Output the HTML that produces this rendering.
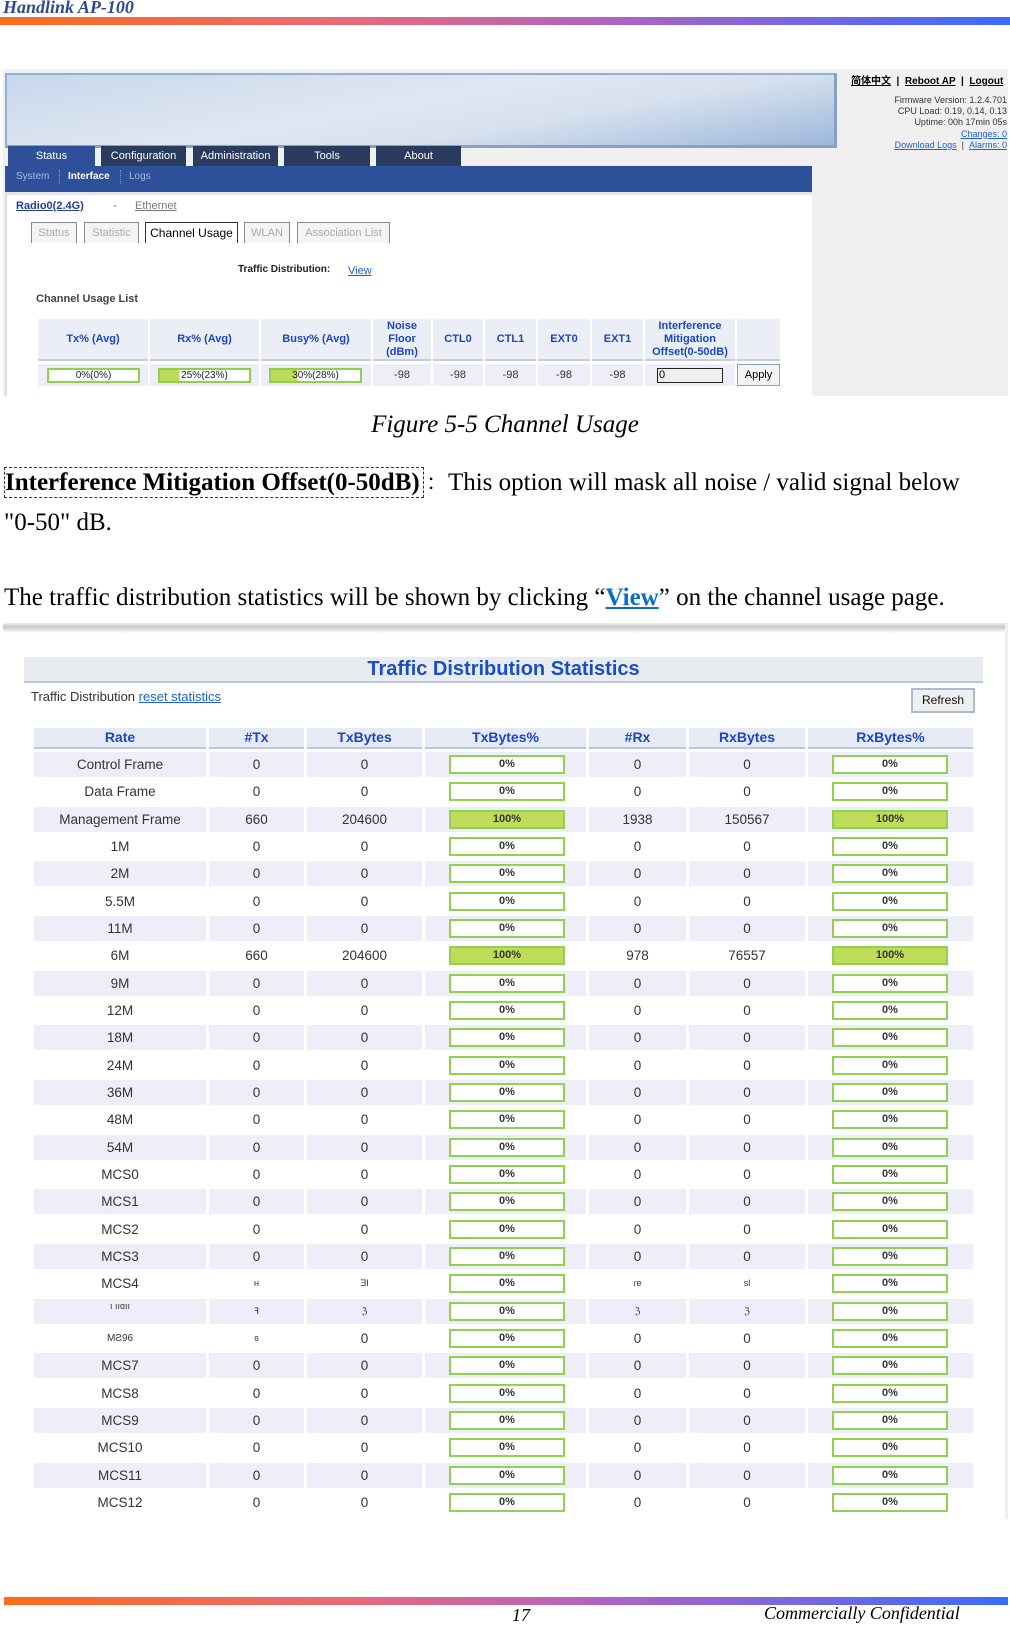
<!DOCTYPE html>
<html><head><meta charset="utf-8">
<style>
*{margin:0;padding:0;box-sizing:border-box}
body{width:1010px;height:1626px;position:relative;background:#fff;overflow:hidden;font-family:"Liberation Sans",sans-serif}
.a{position:absolute}
.ser{font-family:"Liberation Serif",serif}
.gbar{background:linear-gradient(to right,#ff6a1a,#e8697a 35%,#b063c4 60%,#3a6bff)}
.tab{position:absolute;top:146px;height:20px;color:#fff;font-size:11px;text-align:center;line-height:20px;background:#2a3b60}
.sub{position:absolute;top:222px;height:21px;border:1px solid #888;border-bottom:none;font-size:11px;color:#aaa;text-align:center;line-height:20px;background:#f4f4f4}
.ch{position:absolute;top:319px;height:42px;background:#eceef7;border-bottom:2px solid #c8cbd8;color:#1a47c0;font-weight:bold;font-size:11px;text-align:center;display:flex;align-items:center;justify-content:center;line-height:13px}
.cd{position:absolute;top:364px;height:22px;background:#eeeefa;font-size:11px;color:#333;text-align:center;line-height:22px}
.sbar{position:absolute;top:368px;height:15px;border:2px solid #8fd14f;background:#fff;font-size:10px;line-height:11px;text-align:center;color:#222}
.row{position:absolute;left:34px;height:25px;display:flex;gap:3px}
.row div{height:25px;font-size:13.5px;color:#333;text-align:center;line-height:25px;position:relative}
.sh div{background:#eeeefa}
.bar{position:absolute;top:3px;left:24px;width:116px;height:19px;border:2px solid #92d050;background:#fff;font-size:11px;font-weight:bold;line-height:15px;color:#333;text-align:center}
.full{background:#bedc5a}
.th{position:absolute;top:728px;height:21px;background:#e6eaf4;border-bottom:2px solid #b6c6e0;color:#1a47c0;font-weight:bold;font-size:14px;text-align:center;line-height:19px}
</style></head><body>

<div class="a ser" style="left:3px;top:-3px;font-size:18px;font-weight:bold;font-style:italic;color:#2b4a92">Handlink AP-100</div>
<div class="a gbar" style="left:0;top:17px;width:1010px;height:8px"></div>

<!-- screenshot 1 -->
<div class="a" style="left:3px;top:69px;width:1005px;height:327px;background:#f0f0f0"></div>
<div class="a" style="left:5px;top:73px;width:832px;height:75px;border:2px solid #8fb0d8;border-right:3px solid #8aa0c0;border-bottom:3px solid #8aa0c0;background:linear-gradient(170deg,#c9d7ec 0%,#dfe7f2 45%,#d7e1ee 65%,#9db8dc 100%)"></div>
<div class="tab" style="left:8px;width:87px;background:#2f4f99">Status</div>
<div class="tab" style="left:101px;width:85px">Configuration</div>
<div class="tab" style="left:193px;width:85px">Administration</div>
<div class="tab" style="left:284px;width:86px">Tools</div>
<div class="tab" style="left:376px;width:85px">About</div>
<div class="a" style="left:5px;top:166px;width:807px;height:26px;background:#2e4f99"></div>
<div class="a" style="left:16px;top:171px;font-size:10px;color:#a9b8dc">System</div>
<div class="a" style="left:59px;top:170px;height:14px;border-left:1px dotted #7f95c8"></div>
<div class="a" style="left:68px;top:171px;font-size:10px;color:#fff;font-weight:bold">Interface</div>
<div class="a" style="left:120px;top:170px;height:14px;border-left:1px dotted #7f95c8"></div>
<div class="a" style="left:129px;top:171px;font-size:10px;color:#a9b8dc">Logs</div>
<div class="a" style="left:5px;top:192px;width:807px;height:204px;background:#fff;border-left:2px solid #ddd;border-top:3px solid #e6e6e6"></div>

<div class="a" style="left:16px;top:200px;font-size:11px;font-weight:bold;color:#1f3f99;text-decoration:underline">Radio0(2.4G)</div>
<div class="a" style="left:113px;top:200px;font-size:11px;color:#666">-</div>
<div class="a" style="left:135px;top:200px;font-size:11px;color:#777;text-decoration:underline">Ethernet</div>
<div class="sub" style="left:31px;width:46px">Status</div>
<div class="sub" style="left:84px;width:55px">Statistic</div>
<div class="sub" style="left:145px;width:93px;background:#fff;color:#000;border-color:#333;font-size:12px">Channel Usage</div>
<div class="sub" style="left:244px;width:46px">WLAN</div>
<div class="sub" style="left:297px;width:93px">Association List</div>
<div class="a" style="left:238px;top:264px;font-size:10px;font-weight:bold;color:#222">Traffic Distribution:</div>
<div class="a" style="left:348px;top:265px;font-size:11px;color:#1a60d8;text-decoration:underline">View</div>
<div class="a" style="left:36px;top:293px;font-size:11px;font-weight:bold;color:#444">Channel Usage List</div>

<div class="ch" style="left:38px;width:110px">Tx% (Avg)</div>
<div class="ch" style="left:150px;width:109px">Rx% (Avg)</div>
<div class="ch" style="left:261px;width:110px">Busy% (Avg)</div>
<div class="ch" style="left:373px;width:58px">Noise<br>Floor<br>(dBm)</div>
<div class="ch" style="left:433px;width:50px">CTL0</div>
<div class="ch" style="left:485px;width:51px">CTL1</div>
<div class="ch" style="left:538px;width:52px">EXT0</div>
<div class="ch" style="left:592px;width:51px">EXT1</div>
<div class="ch" style="left:645px;width:90px">Interference<br>Mitigation<br>Offset(0-50dB)</div>
<div class="ch" style="left:737px;width:43px"></div>
<div class="cd" style="left:38px;width:110px"></div>
<div class="cd" style="left:150px;width:109px"></div>
<div class="cd" style="left:261px;width:110px"></div>
<div class="cd" style="left:373px;width:58px">-98</div>
<div class="cd" style="left:433px;width:50px">-98</div>
<div class="cd" style="left:485px;width:51px">-98</div>
<div class="cd" style="left:538px;width:52px">-98</div>
<div class="cd" style="left:592px;width:51px">-98</div>
<div class="cd" style="left:645px;width:90px"></div>
<div class="sbar" style="left:47px;width:93px">0%(0%)</div>
<div class="sbar" style="left:158px;width:93px;background:linear-gradient(to right,#bedc5a 22%,#fff 22%)">25%(23%)</div>
<div class="sbar" style="left:269px;width:93px;background:linear-gradient(to right,#bedc5a 30%,#fff 30%)">30%(28%)</div>
<div class="a" style="left:657px;top:368px;width:66px;height:15px;border:1px solid #222;background:#eee;font-size:11px;line-height:13px;padding-left:1px">0</div>
<div class="a" style="left:737px;top:364px;width:43px;height:22px;border:1px solid #8aa0c0;background:#f4f4f4;font-size:11px;text-align:center;line-height:20px">Apply</div>

<div class="a" style="left:851px;top:72px;font-size:10px;font-weight:bold;color:#000;white-space:nowrap;font-family:'Liberation Sans','Noto Sans CJK SC',sans-serif"><u>简体中文</u> &nbsp;| &nbsp;<u>Reboot AP</u> &nbsp;| &nbsp;<u>Logout</u></div>
<div class="a" style="right:3px;top:95px;font-size:9px;color:#333;text-align:right;line-height:11.2px;white-space:nowrap">Firmware Version: 1.2.4.701<br>CPU Load: 0.19, 0.14, 0.13<br>Uptime: 00h 17min 05s<br><u style="color:#1a60d8">Changes: 0</u><br><u style="color:#1a60d8">Download Logs</u> &nbsp;| &nbsp;<u style="color:#1a60d8">Alarms: 0</u></div>

<!-- text -->
<div class="a ser" style="left:0;width:1010px;top:411px;text-align:center;font-size:25px;font-style:italic;color:#000">Figure 5-5 Channel Usage</div>
<div class="a ser" style="left:4px;top:467px;height:31px;width:420px;border:1px dashed #333"></div>
<div class="a ser" style="left:5px;top:466px;font-size:25px;color:#000;white-space:nowrap"><b>Interference Mitigation Offset(0-50dB)</b> <span style="font-family:'Noto Serif CJK SC',serif;font-size:22px">：</span>This option will mask all noise / valid signal below</div>
<div class="a ser" style="left:4px;top:509px;font-size:25px;color:#000">"0-50" dB.</div>
<div class="a ser" style="left:4px;top:584px;font-size:25px;color:#000;white-space:nowrap">The traffic distribution statistics will be shown by clicking “<b style="color:#0a6ec8;text-decoration:underline">View</b>” on the channel usage page.</div>

<!-- screenshot 2 -->
<div class="a" style="left:3px;top:623px;width:1005px;height:10px;background:linear-gradient(#eee,#c8c8c8 40%,#fff)"></div>
<div class="a" style="left:1005px;top:623px;width:3px;height:896px;background:#eee"></div>
<div class="a" style="left:24px;top:657px;width:959px;height:26px;background:#e8ebf0;border-bottom:2px solid #b8c8e0;text-align:center;font-size:20px;font-weight:bold;color:#1a4fc0;line-height:24px">Traffic Distribution Statistics</div>
<div class="a" style="left:31px;top:689px;font-size:13px;color:#333">Traffic Distribution <span style="color:#1a60d8;text-decoration:underline">reset statistics</span></div>
<div class="a" style="left:911px;top:688px;width:64px;height:25px;border:2px solid #a8bcd4;background:#f0f0f0;font-size:12px;text-align:center;line-height:21px;color:#111">Refresh</div>

<div class="th" style="left:34px;width:172px">Rate</div>
<div class="th" style="left:209px;width:95px">#Tx</div>
<div class="th" style="left:307px;width:115px">TxBytes</div>
<div class="th" style="left:425px;width:161px">TxBytes%</div>
<div class="th" style="left:589px;width:97px">#Rx</div>
<div class="th" style="left:689px;width:116px">RxBytes</div>
<div class="th" style="left:808px;width:165px">RxBytes%</div>

<div class="row sh" style="top:752px"><div style="width:172px">Control Frame</div><div style="width:95px">0</div><div style="width:115px">0</div><div style="width:161px"><span class="bar">0%</span></div><div style="width:97px">0</div><div style="width:116px">0</div><div style="width:165px"><span class="bar">0%</span></div></div>
<div class="row" style="top:779px"><div style="width:172px">Data Frame</div><div style="width:95px">0</div><div style="width:115px">0</div><div style="width:161px"><span class="bar">0%</span></div><div style="width:97px">0</div><div style="width:116px">0</div><div style="width:165px"><span class="bar">0%</span></div></div>
<div class="row sh" style="top:807px"><div style="width:172px">Management Frame</div><div style="width:95px">660</div><div style="width:115px">204600</div><div style="width:161px"><span class="bar full">100%</span></div><div style="width:97px">1938</div><div style="width:116px">150567</div><div style="width:165px"><span class="bar full">100%</span></div></div>
<div class="row" style="top:834px"><div style="width:172px">1M</div><div style="width:95px">0</div><div style="width:115px">0</div><div style="width:161px"><span class="bar">0%</span></div><div style="width:97px">0</div><div style="width:116px">0</div><div style="width:165px"><span class="bar">0%</span></div></div>
<div class="row sh" style="top:861px"><div style="width:172px">2M</div><div style="width:95px">0</div><div style="width:115px">0</div><div style="width:161px"><span class="bar">0%</span></div><div style="width:97px">0</div><div style="width:116px">0</div><div style="width:165px"><span class="bar">0%</span></div></div>
<div class="row" style="top:889px"><div style="width:172px">5.5M</div><div style="width:95px">0</div><div style="width:115px">0</div><div style="width:161px"><span class="bar">0%</span></div><div style="width:97px">0</div><div style="width:116px">0</div><div style="width:165px"><span class="bar">0%</span></div></div>
<div class="row sh" style="top:916px"><div style="width:172px">11M</div><div style="width:95px">0</div><div style="width:115px">0</div><div style="width:161px"><span class="bar">0%</span></div><div style="width:97px">0</div><div style="width:116px">0</div><div style="width:165px"><span class="bar">0%</span></div></div>
<div class="row" style="top:943px"><div style="width:172px">6M</div><div style="width:95px">660</div><div style="width:115px">204600</div><div style="width:161px"><span class="bar full">100%</span></div><div style="width:97px">978</div><div style="width:116px">76557</div><div style="width:165px"><span class="bar full">100%</span></div></div>
<div class="row sh" style="top:971px"><div style="width:172px">9M</div><div style="width:95px">0</div><div style="width:115px">0</div><div style="width:161px"><span class="bar">0%</span></div><div style="width:97px">0</div><div style="width:116px">0</div><div style="width:165px"><span class="bar">0%</span></div></div>
<div class="row" style="top:998px"><div style="width:172px">12M</div><div style="width:95px">0</div><div style="width:115px">0</div><div style="width:161px"><span class="bar">0%</span></div><div style="width:97px">0</div><div style="width:116px">0</div><div style="width:165px"><span class="bar">0%</span></div></div>
<div class="row sh" style="top:1025px"><div style="width:172px">18M</div><div style="width:95px">0</div><div style="width:115px">0</div><div style="width:161px"><span class="bar">0%</span></div><div style="width:97px">0</div><div style="width:116px">0</div><div style="width:165px"><span class="bar">0%</span></div></div>
<div class="row" style="top:1053px"><div style="width:172px">24M</div><div style="width:95px">0</div><div style="width:115px">0</div><div style="width:161px"><span class="bar">0%</span></div><div style="width:97px">0</div><div style="width:116px">0</div><div style="width:165px"><span class="bar">0%</span></div></div>
<div class="row sh" style="top:1080px"><div style="width:172px">36M</div><div style="width:95px">0</div><div style="width:115px">0</div><div style="width:161px"><span class="bar">0%</span></div><div style="width:97px">0</div><div style="width:116px">0</div><div style="width:165px"><span class="bar">0%</span></div></div>
<div class="row" style="top:1107px"><div style="width:172px">48M</div><div style="width:95px">0</div><div style="width:115px">0</div><div style="width:161px"><span class="bar">0%</span></div><div style="width:97px">0</div><div style="width:116px">0</div><div style="width:165px"><span class="bar">0%</span></div></div>
<div class="row sh" style="top:1135px"><div style="width:172px">54M</div><div style="width:95px">0</div><div style="width:115px">0</div><div style="width:161px"><span class="bar">0%</span></div><div style="width:97px">0</div><div style="width:116px">0</div><div style="width:165px"><span class="bar">0%</span></div></div>
<div class="row" style="top:1162px"><div style="width:172px">MCS0</div><div style="width:95px">0</div><div style="width:115px">0</div><div style="width:161px"><span class="bar">0%</span></div><div style="width:97px">0</div><div style="width:116px">0</div><div style="width:165px"><span class="bar">0%</span></div></div>
<div class="row sh" style="top:1189px"><div style="width:172px">MCS1</div><div style="width:95px">0</div><div style="width:115px">0</div><div style="width:161px"><span class="bar">0%</span></div><div style="width:97px">0</div><div style="width:116px">0</div><div style="width:165px"><span class="bar">0%</span></div></div>
<div class="row" style="top:1217px"><div style="width:172px">MCS2</div><div style="width:95px">0</div><div style="width:115px">0</div><div style="width:161px"><span class="bar">0%</span></div><div style="width:97px">0</div><div style="width:116px">0</div><div style="width:165px"><span class="bar">0%</span></div></div>
<div class="row sh" style="top:1244px"><div style="width:172px">MCS3</div><div style="width:95px">0</div><div style="width:115px">0</div><div style="width:161px"><span class="bar">0%</span></div><div style="width:97px">0</div><div style="width:116px">0</div><div style="width:165px"><span class="bar">0%</span></div></div>
<div class="row" style="top:1271px"><div style="width:172px">MCS4</div><div style="width:95px;font-size:9px">ʜ</div><div style="width:115px;font-size:9px">ƎI</div><div style="width:161px"><span class="bar">0%</span></div><div style="width:97px;font-size:9px">ɾe</div><div style="width:116px;font-size:9px">sl</div><div style="width:165px"><span class="bar">0%</span></div></div>
<div class="row sh" style="top:1299px"><div style="width:172px;font-size:9px;line-height:14px">ı ııɑıı</div><div style="width:95px;font-size:9px">ꟻ</div><div style="width:115px;font-size:9px">ℨ</div><div style="width:161px"><span class="bar">0%</span></div><div style="width:97px;font-size:9px">ℨ</div><div style="width:116px;font-size:9px">ℨ</div><div style="width:165px"><span class="bar">0%</span></div></div>
<div class="row" style="top:1326px"><div style="width:172px;font-size:10px">MƧ96</div><div style="width:95px;font-size:9px">ɞ</div><div style="width:115px">0</div><div style="width:161px"><span class="bar">0%</span></div><div style="width:97px">0</div><div style="width:116px">0</div><div style="width:165px"><span class="bar">0%</span></div></div>
<div class="row sh" style="top:1353px"><div style="width:172px">MCS7</div><div style="width:95px">0</div><div style="width:115px">0</div><div style="width:161px"><span class="bar">0%</span></div><div style="width:97px">0</div><div style="width:116px">0</div><div style="width:165px"><span class="bar">0%</span></div></div>
<div class="row" style="top:1381px"><div style="width:172px">MCS8</div><div style="width:95px">0</div><div style="width:115px">0</div><div style="width:161px"><span class="bar">0%</span></div><div style="width:97px">0</div><div style="width:116px">0</div><div style="width:165px"><span class="bar">0%</span></div></div>
<div class="row sh" style="top:1408px"><div style="width:172px">MCS9</div><div style="width:95px">0</div><div style="width:115px">0</div><div style="width:161px"><span class="bar">0%</span></div><div style="width:97px">0</div><div style="width:116px">0</div><div style="width:165px"><span class="bar">0%</span></div></div>
<div class="row" style="top:1435px"><div style="width:172px">MCS10</div><div style="width:95px">0</div><div style="width:115px">0</div><div style="width:161px"><span class="bar">0%</span></div><div style="width:97px">0</div><div style="width:116px">0</div><div style="width:165px"><span class="bar">0%</span></div></div>
<div class="row sh" style="top:1463px"><div style="width:172px">MCS11</div><div style="width:95px">0</div><div style="width:115px">0</div><div style="width:161px"><span class="bar">0%</span></div><div style="width:97px">0</div><div style="width:116px">0</div><div style="width:165px"><span class="bar">0%</span></div></div>
<div class="row" style="top:1490px"><div style="width:172px">MCS12</div><div style="width:95px">0</div><div style="width:115px">0</div><div style="width:161px"><span class="bar">0%</span></div><div style="width:97px">0</div><div style="width:116px">0</div><div style="width:165px"><span class="bar">0%</span></div></div>

<!-- footer -->
<div class="a gbar" style="left:4px;top:1597px;width:1004px;height:8px"></div>
<div class="a ser" style="left:512px;top:1605px;font-size:18px;font-style:italic;color:#000">17</div>
<div class="a ser" style="left:764px;top:1603px;font-size:18px;font-style:italic;color:#000;white-space:nowrap">Commercially Confidential</div>
</body></html>
